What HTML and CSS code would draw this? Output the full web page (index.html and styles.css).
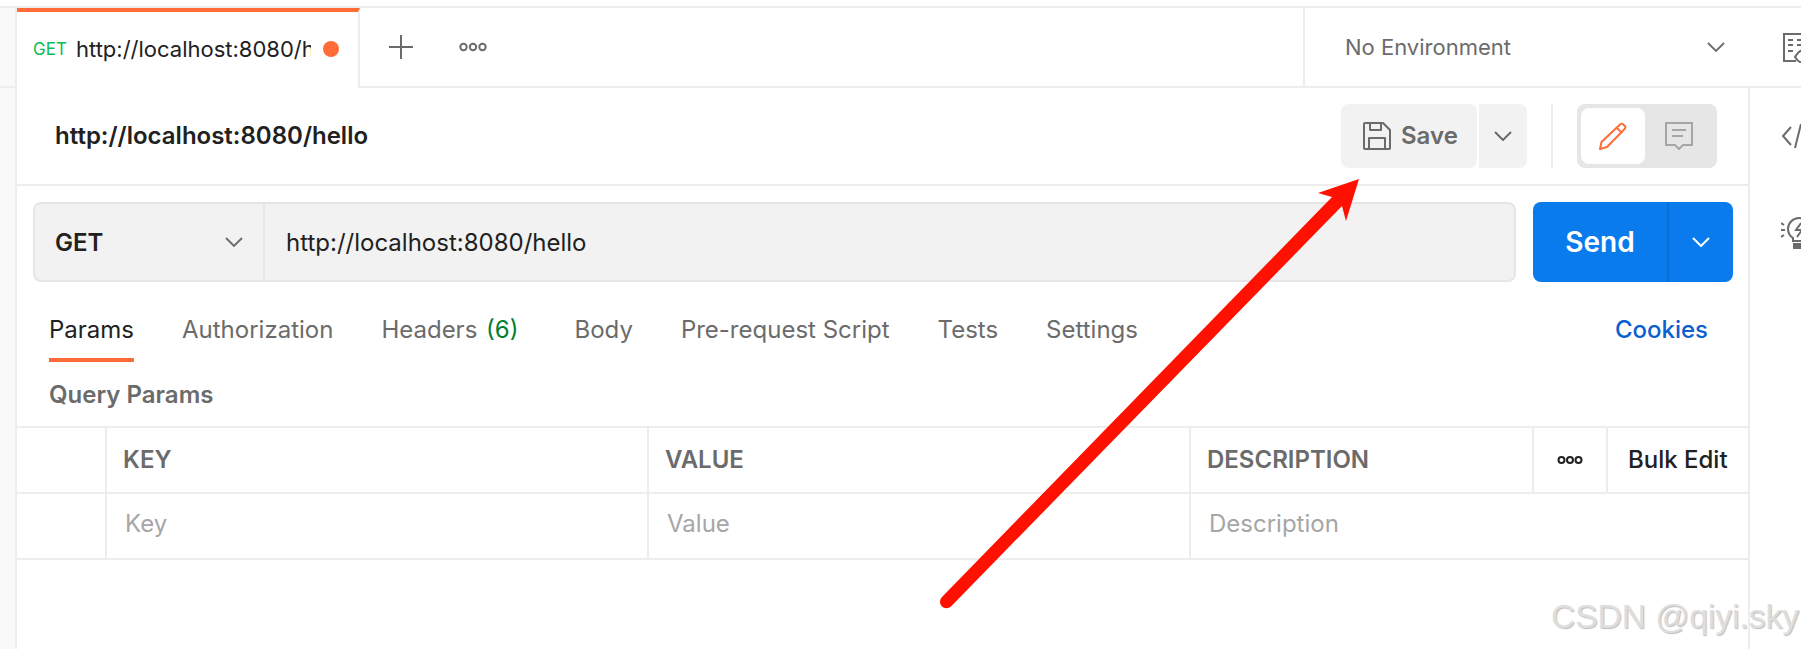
FILE: index.html
```html
<!DOCTYPE html>
<html lang="en">
<head>
<meta charset="utf-8">
<title>Postman request</title>
<link rel="stylesheet" href="styles.css">
</head>
<body>
<div class="app">
  <div class="top-strip"></div>
  <div class="window">
    <aside class="sidebar"><div class="sidebar-head"></div></aside>
    <div class="main">
      <header class="tabbar">
        <div class="tab">
          <span class="tab-method">GET</span>
          <span class="tab-url">http://localhost:8080/hello</span>
          <span class="tab-dot"></span>
        </div>
        <button class="tab-plus" aria-label="New tab">
          <svg width="26" height="26" viewBox="0 0 26 26"><path d="M13 1v24M1 13h24" fill="none" stroke="#6b6b6b" stroke-width="2"/></svg>
        </button>
        <button class="tab-more" aria-label="More">
          <svg width="28" height="10" viewBox="0 0 28 10"><g fill="none" stroke="#6b6b6b" stroke-width="2"><circle cx="4.500" cy="5" r="3.200"/><circle cx="14" cy="5" r="3.200"/><circle cx="23.500" cy="5" r="3.200"/></g></svg>
        </button>
        <div class="env">
          <span class="env-name">No Environment</span>
          <svg class="env-chevron" width="18" height="10" viewBox="0 0 18 10"><path d="M1 1l8 8 8-8" fill="none" stroke="#6b6b6b" stroke-width="1.800"/></svg>
        </div>
        <div class="env-icon">
          <svg width="30" height="30" viewBox="0 0 30 30"><g fill="none" stroke="#6b6b6b" stroke-width="2"><path d="M19 1H1v27h12"/><path d="M5 7h5M14 7h5M23 7h5M5 12h5M14 12h5M23 12h5M5 18h5"/><path d="M1 1h28v12"/><path d="M12 24c3-5 6-7 9-7s6 2 9 7c-3 5-6 6-9 6s-6-1-9-6z"/><circle cx="21" cy="24" r="2"/></g></svg>
        </div>
      </header>
      <div class="workspace">
        <section class="request">
          <div class="title-row">
            <h1 class="title">http://localhost:8080/hello</h1>
            <div class="title-actions">
              <button class="save">
                <svg width="28" height="28" viewBox="0 0 28 28"><g fill="none" stroke="#6b6b6b" stroke-width="2" stroke-linejoin="round"><path d="M1 2a1 1 0 0 1 1-1h18l7 7v18a1 1 0 0 1-1 1H2a1 1 0 0 1-1-1z"/><path d="M7 1v7h11V1"/><path d="M6 27V16h16v11"/></g></svg>
                <span>Save</span>
              </button>
              <button class="save-more" aria-label="Save options">
                <svg width="18" height="10" viewBox="0 0 18 10"><path d="M1 1l8 8 8-8" fill="none" stroke="#6b6b6b" stroke-width="2"/></svg>
              </button>
              <span class="title-divider"></span>
              <div class="mode-toggle">
                <span class="mode mode-active">
                  <svg width="28" height="28" viewBox="0 0 28 28"><g fill="none" stroke="#ff6c37" stroke-width="2" stroke-linejoin="round"><path d="M21 2.500a2 2 0 0 1 3-.300l1.800 1.800a2 2 0 0 1-.2 3L8 25l-7 2 1.500-7z"/><path d="M18 6l5 5"/></g></svg>
                </span>
                <span class="mode">
                  <svg width="28" height="28" viewBox="0 0 28 28"><g fill="none" stroke="#a6a6a6" stroke-width="2"><path d="M1 1h26v22H18l-4 4-4-4H1z"/><path d="M7 8h14M7 14h11"/></g></svg>
                </span>
              </div>
            </div>
          </div>
          <div class="url-row">
            <div class="url-box">
              <div class="method">
                <span>GET</span>
                <svg width="18" height="10" viewBox="0 0 18 10"><path d="M1 1l8 8 8-8" fill="none" stroke="#6b6b6b" stroke-width="1.800"/></svg>
              </div>
              <div class="url">http://localhost:8080/hello</div>
            </div>
            <div class="send">
              <span class="send-label">Send</span>
              <span class="send-more"><svg width="18" height="10" viewBox="0 0 18 10"><path d="M1 1l8 8 8-8" fill="none" stroke="#fff" stroke-width="2"/></svg></span>
            </div>
          </div>
          <nav class="req-tabs">
            <span class="req-tab req-tab-active">Params</span>
            <span class="req-tab">Authorization</span>
            <span class="req-tab req-tab-wide">Headers <em class="count">(6)</em></span>
            <span class="req-tab">Body</span>
            <span class="req-tab">Pre-request Script</span>
            <span class="req-tab">Tests</span>
            <span class="req-tab">Settings</span>
            <span class="cookies">Cookies</span>
          </nav>
          <div class="section-label">Query Params</div>
          <div class="params">
            <div class="cell"></div>
            <div class="cell head">KEY</div>
            <div class="cell head">VALUE</div>
            <div class="cell head">DESCRIPTION</div>
            <div class="cell more">
              <svg width="26" height="10" viewBox="0 0 26 10"><g fill="none" stroke="#212121" stroke-width="2"><circle cx="4.500" cy="5" r="3"/><circle cx="13" cy="5" r="3"/><circle cx="21.500" cy="5" r="3"/></g></svg>
            </div>
            <div class="cell bulk">Bulk Edit</div>
            <div class="cell"></div>
            <div class="cell ph">Key</div>
            <div class="cell ph">Value</div>
            <div class="cell ph span-desc">Description</div>
          </div>
        </section>
        <aside class="rail">
          <svg class="rail-code" width="30" height="26" viewBox="0 0 30 26"><path d="M10 4L2 13l8 9M20 1l-6 24" fill="none" stroke="#6b6b6b" stroke-width="2"/></svg>
          <svg class="rail-bulb" width="30" height="32" viewBox="0 0 30 32"><g fill="none" stroke="#6b6b6b" stroke-width="2"><path d="M0 6l3 2M0 13h4M0 20l3-2"/><path d="M12 24v-3c-3-2-5-5-5-9a11 11 0 0 1 22 0c0 4-2 7-5 9v3z"/><path d="M20 6l-5 7h6l-5 7"/></g><path d="M12 26h14v6H12z" fill="#6b6b6b"/></svg>
        </aside>
      </div>
    </div>
  </div>
  <svg class="arrow" width="1801" height="649" viewBox="0 0 1801 649" aria-hidden="true">
    <path d="M1359 179L1318 193 1332 197 942 597a6.500 6.500 0 0 0 9 9.500L1342 206 1346 221z" fill="#fe1100"/>
  </svg>
  <div class="watermark">CSDN @qiyi.sky</div>
</div>
</body>
</html>
```
FILE: styles.css
```css
* { box-sizing: border-box; }
html, body { margin: 0; padding: 0; background: #fff; }
body { font-family: Inter, "Liberation Sans", sans-serif; color: #212121; }
button { border: 0; padding: 0; background: none; font: inherit; color: inherit; }
svg { display: block; }

.app { position: relative; width: 1801px; height: 649px; overflow: hidden; display: flex; flex-direction: column; }
.top-strip { height: 8px; border-bottom: 2px solid #ededed; flex: none; }
.window { flex: 1; display: flex; min-height: 0; }

.sidebar { width: 17px; flex: none; background: #f9f9f9; border-right: 2px solid #ededed; }
.sidebar-head { height: 80px; border-bottom: 2px solid #ededed; }
.main { flex: 1; min-width: 0; display: flex; flex-direction: column; }

.tabbar { height: 80px; flex: none; display: flex; align-items: stretch; border-bottom: 2px solid #ededed; }
.tab { width: 343px; height: 80px; flex: none; display: flex; align-items: center; padding: 0 18px 0 16px; background: #fff; border-top: 4px solid #ff6c37; border-right: 2px solid #ededed; }
.tab-method { font-size: 17px; color: #0cbb52; width: 43px; flex: none; position: relative; top: -1px; }
.tab-url { font-size: 22px; width: 235px; overflow: hidden; white-space: nowrap; flex: none; position: relative; top: -1px; }
.tab-dot { width: 16px; height: 16px; border-radius: 50%; background: #ff6c37; margin-left: 12px; flex: none; position: relative; top: -1px; }
.tab-plus { width: 26px; height: 78px; margin-left: 28px; display: flex; align-items: center; justify-content: center; flex: none; }
.tab-more { width: 28px; height: 78px; margin-left: 45px; display: flex; align-items: center; justify-content: center; flex: none; }
.env { margin-left: auto; width: 480px; height: 78px; flex: none; display: flex; align-items: center; justify-content: space-between; padding: 0 58px 0 40px; border-left: 2px solid #ededed; }
.env-name { font-size: 22px; color: #6b6b6b; }
.env-icon { width: 18px; height: 78px; flex: none; overflow: hidden; padding-top: 25px; }

.workspace { flex: 1; min-height: 0; display: flex; }
.request { width: 1733px; flex: none; border-right: 2px solid #ededed; }
.rail { flex: 1; overflow: hidden; padding: 35px 0 0 31px; display: flex; flex-direction: column; gap: 68px; }

.title-row { height: 98px; display: flex; align-items: center; justify-content: space-between; padding: 0 31px 1px 38px; border-bottom: 2px solid #ededed; }
.title { margin: 0; font-size: 24px; font-weight: 600; }
.title-actions { display: flex; align-items: stretch; height: 64px; }
.save { width: 136px; display: flex; align-items: center; gap: 10px; padding-left: 22px; background: #f2f2f2; border-radius: 8px; font-size: 24px; font-weight: 600; color: #6b6b6b; }
.save-more { width: 48px; margin-left: 2px; display: flex; align-items: center; justify-content: center; background: #f2f2f2; border-radius: 0 8px 8px 0; }
.title-divider { width: 2px; margin: 0 24px; background: #ededed; }
.mode-toggle { width: 140px; display: flex; padding: 4px; background: #e6e6e6; border-radius: 8px; }
.mode { width: 64px; display: flex; align-items: center; justify-content: center; border-radius: 8px; }
.mode:last-child { width: 68px; }
.mode-active { background: #fff; }

.url-row { display: flex; gap: 17px; padding: 16px 15px 0 16px; }
.url-box { width: 1483px; height: 80px; display: flex; background: #f2f2f2; border: 2px solid #e6e6e6; border-radius: 8px; }
.method { width: 230px; flex: none; display: flex; align-items: center; justify-content: space-between; padding: 0 20px 0 20px; border-right: 2px solid #e6e6e6; font-size: 24px; font-weight: 600; }
.url { padding-left: 21px; align-self: center; font-size: 24px; }
.send { width: 200px; height: 80px; display: flex; background: #097bed; border-radius: 8px; color: #fff; }
.send-label { width: 136px; text-align: center; line-height: 80px; font-size: 28px; font-weight: 600; border-right: 2px solid #0a6fd4; }
.send-more { flex: 1; display: flex; align-items: center; justify-content: center; }

.req-tabs { height: 80px; display: flex; gap: 48px; padding: 0 40px 0 32px; font-size: 24px; color: #6b6b6b; }
.req-tab { height: 80px; padding-top: 35px; line-height: 26px; white-space: nowrap; }
.req-tab-active { color: #212121; border-bottom: 4px solid #ff6c37; }
.req-tab-wide { margin-right: 8px; }
.count { font-style: normal; color: #007f31; margin-left: 2px; }
.cookies { margin-left: auto; padding-top: 35px; line-height: 26px; color: #0b5fcf; font-weight: 500; }

.section-label { height: 64px; padding: 20px 0 0 32px; line-height: 26px; font-size: 24px; font-weight: 600; color: #6b6b6b; }

.params { display: grid; grid-template-columns: 90px 542px 542px 343px 74px 1fr; grid-auto-rows: 66px; border-top: 2px solid #ededed; }
.cell { display: flex; align-items: center; border-right: 2px solid #ededed; border-bottom: 2px solid #ededed; font-size: 24px; padding-left: 16px; }
.cell:last-child, .bulk { border-right: 0; }
.head { font-weight: 600; color: #6b6b6b; padding-bottom: 2px; }
.more { justify-content: center; padding-left: 0; }
.bulk { font-weight: 500; padding-left: 20px; padding-bottom: 2px; white-space: nowrap; }
.ph { color: #a6a6a6; padding-left: 18px; padding-bottom: 5px; }
.span-desc { grid-column: span 3; }

.arrow { position: absolute; left: 0; top: 0; pointer-events: none; }
.watermark { position: absolute; left: 1551px; top: 596px; font-family: "Liberation Sans", Arial, sans-serif; font-size: 33.500px; line-height: 42px; white-space: nowrap; color: #dedede; text-shadow: 1px 1px 1px #bdbdbd; }
```
